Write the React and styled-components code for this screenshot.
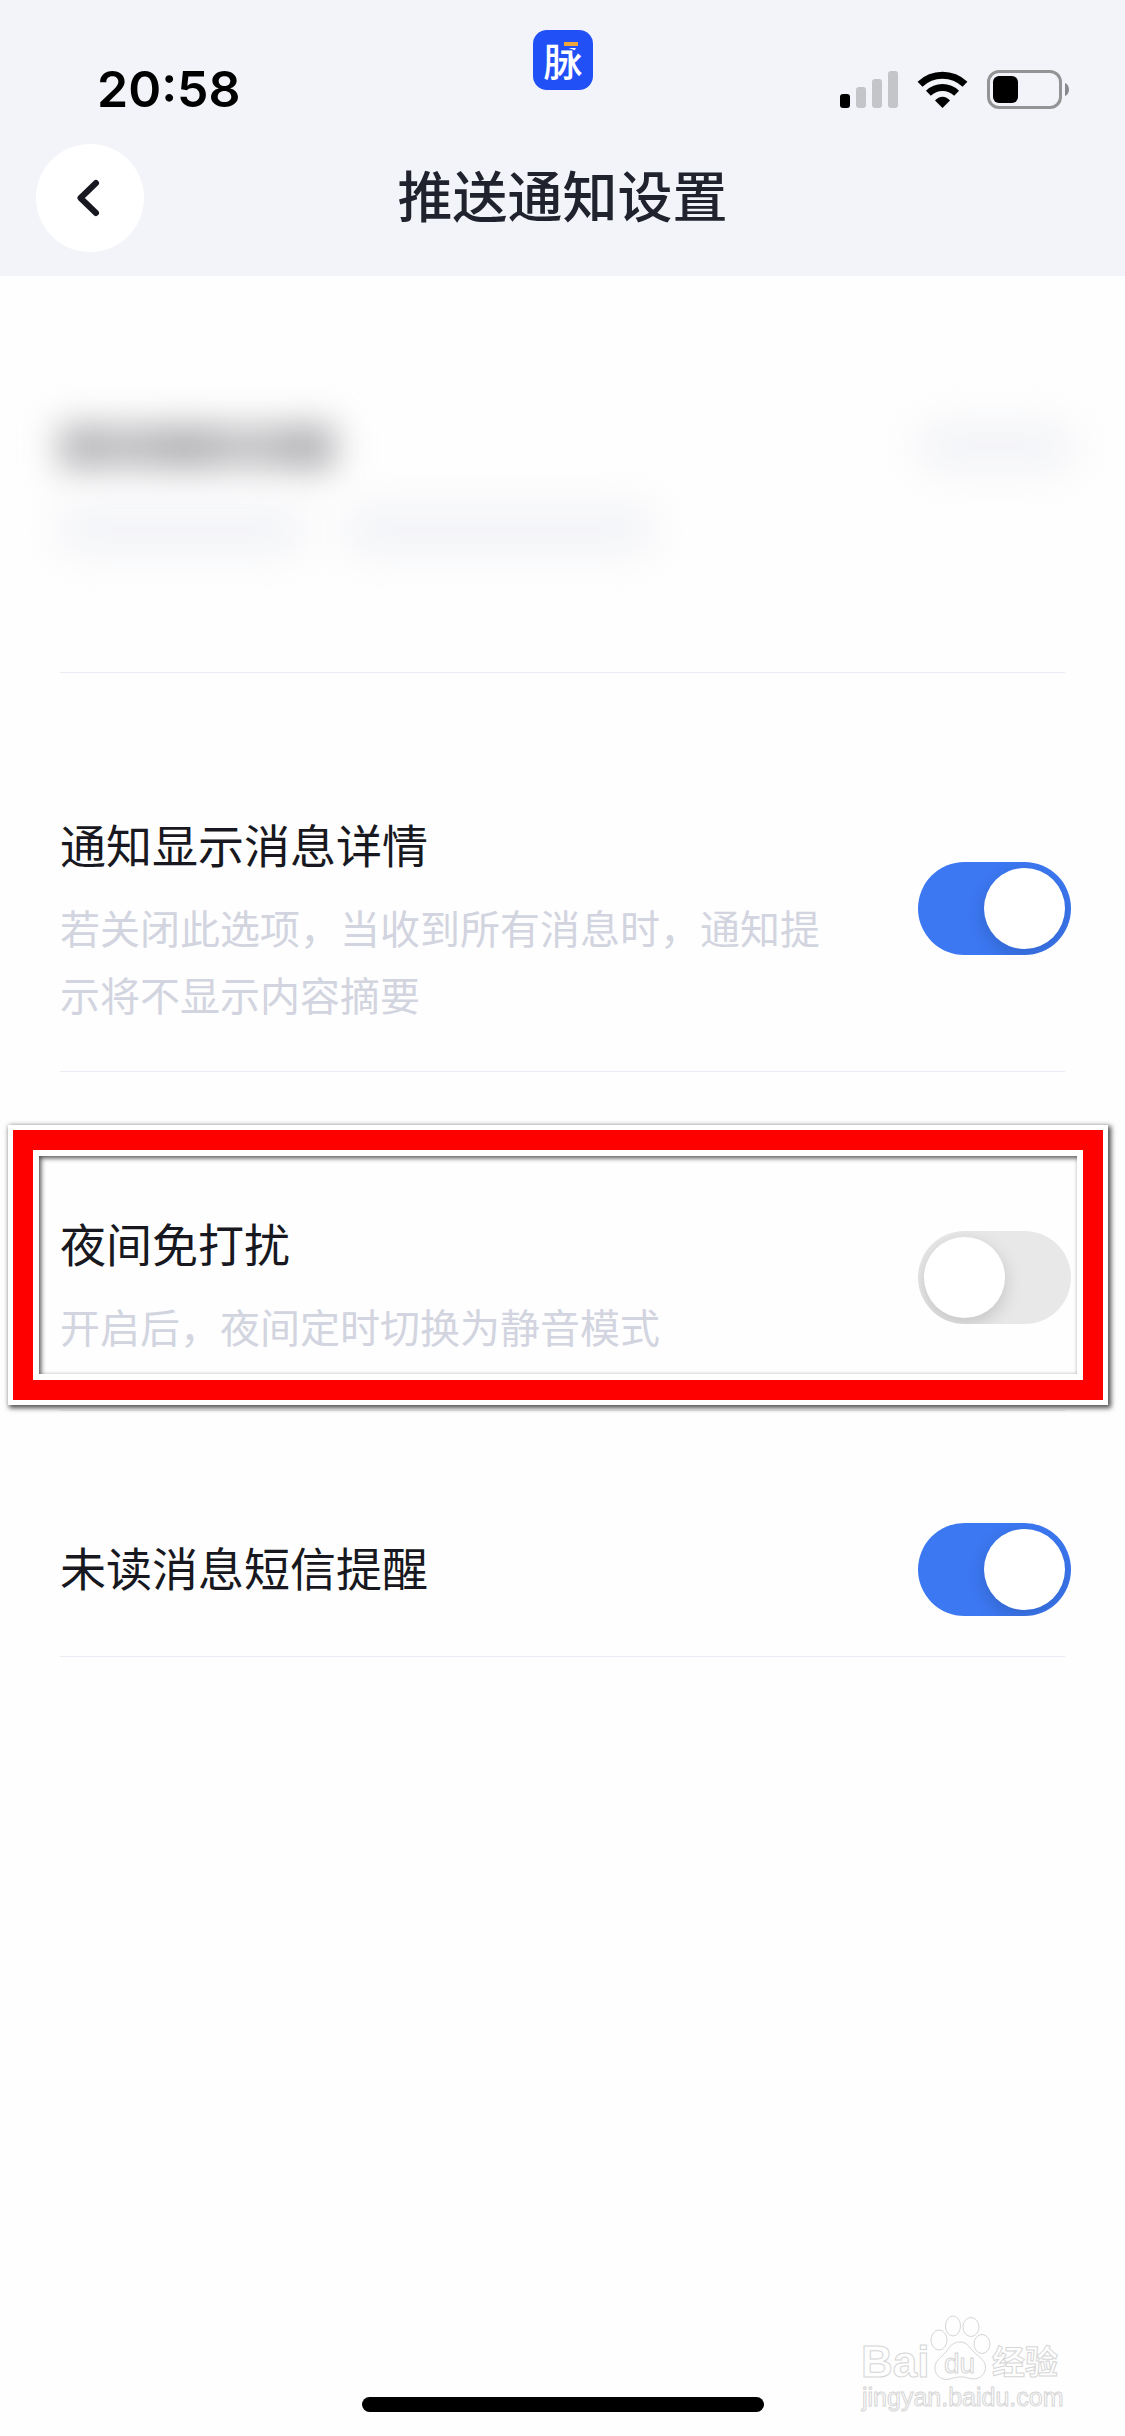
import { useState } from "react"
import styled, { createGlobalStyle } from "styled-components"

const GlobalStyle = createGlobalStyle`
    *{
        box-sizing:border-box;
    }
    body{
        margin:0;
        background:#fefefe;
        font-family:"Liberation Sans", "Noto Sans CJK SC", sans-serif;
    }
`
const Page = styled.div`
    position:relative;
    min-height:100vh;
    display:flex;
    flex-direction:column;
    color:#171820;
`
const Header = styled.header`
    background:#f3f4f9;
`
const StatusBar = styled.div`
    height:144px;
    padding-top:30px;
    display:grid;
    grid-template-columns:1fr auto 1fr;
    align-items:start;
`
const Side = styled.div`
    height:60px;
    margin-top:29px;
    padding:0 56px 0 97px;
    display:flex;
    align-items:center;
    justify-content:${props => (props.$end ? "flex-end" : "flex-start")};
    gap:19px;
`
const Time = styled.time`
    font-family:Inter, sans-serif;
    font-size:50px;
    font-weight:600;
    line-height:60px;
    color:#000;
`
const Nav = styled.nav`
    display:grid;
    grid-template-columns:1fr auto 1fr;
    align-items:center;
    padding:0 36px 24px;
`
const BackButton = styled.button`
    width:108px;
    height:108px;
    padding:0;
    border:none;
    border-radius:50%;
    background:#fff;
    display:flex;
    align-items:center;
    justify-content:center;
`
const Title = styled.h1`
    margin:0;
    font-size:55px;
    font-weight:500;
    line-height:108px;
    color:#20222e;
`
const Row = styled.section`
    position:relative;
    display:flex;
    align-items:center;
    justify-content:space-between;
    min-height:${props => (props.$tall ? "338px" : "0")};
    padding:112px 54px 40px 60px;
`
const Divider = styled.hr`
    width:auto;
    height:1px;
    margin:0 60px;
    border:none;
    background:#ebebf3;
`
const RowText = styled.div`
    flex:1;
    max-width:776px;
    align-self:${props => (props.$top ? "flex-start" : "center")};
    padding-top:${props => (props.$top ? "30px" : "0")};
`
const RowTitle = styled.label`
    display:block;
    font-size:46px;
    line-height:64px;
`
const RowDesc = styled.p`
    margin:18px 0 0;
    font-size:40px;
    line-height:67px;
    color:#d2d4df;
`
const Switch = styled.input`
    appearance:none;
    flex:none;
    width:153px;
    height:93px;
    margin:0;
    padding:6px;
    border-radius:47px;
    overflow:hidden;
    background:#e8e8e8;
    display:flex;
    justify-content:flex-start;

    &::before{
        content:"";
        width:81px;
        height:81px;
        border-radius:50%;
        background:#fff;
        box-shadow:0 6px 18px rgba(0,0,0,.16);
    }
    &:checked{
        background:#3c78f2;
        justify-content:flex-end;
    }
`
const Highlight = styled.div`
    position:absolute;
    top:58px;
    right:22px;
    bottom:10px;
    left:13px;
    border:20px solid #f00;
    box-shadow:
        0 0 0 5px #fff,
        2px 2px 5px 6px rgba(0,0,0,.7),
        inset 0 0 0 6px #fff,
        inset 2px 2px 5px 6px rgba(0,0,0,.7);
    pointer-events:none;
`
const HiddenRow = styled.section`
    height:396px;
    padding:150px 54px 0 60px;
    display:flex;
    justify-content:space-between;
`
const HiddenText = styled.div`
    display:flex;
    flex-direction:column;
    gap:40px;
`
const HiddenLine = styled.div`
    display:flex;
    gap:44px;
`
const Smudge = styled.span`
    width:${props => props.$width}px;
    height:42px;
    filter:blur(${props => (props.$dark ? "18px" : "20px")});
    background:${props => (props.$dark
        ? "linear-gradient(90deg, #a9a9ad, #bcbcbf 25%, #a8a8ac 46%, #c2c2c4 68%, #a8a8ac 92%)"
        : "#f1f2f6")};
`
const Footer = styled.footer`
    margin-top:auto;
    padding-bottom:24px;
    display:flex;
    justify-content:center;
`
const HomeBar = styled.div`
    width:402px;
    height:15px;
    border-radius:8px;
    background:#000;
`
const Watermark = styled.svg`
    position:absolute;
    right:55px;
    bottom:16px;
`

const AppLogo = () => (
    <svg width="60" height="60" viewBox="0 0 60 60" aria-hidden="true">
        <rect width="60" height="60" rx="14" fill="#2150f7" />
        <text x="30" y="46" fontSize="39" fontWeight="500" textAnchor="middle" fill="#fff" fontFamily="Noto Sans CJK SC, sans-serif">脉</text>
        <rect x="30" y="8" width="18" height="10" fill="#2150f7" />
        <rect x="31" y="12" width="14" height="4" fill="#f0a63a" />
    </svg>
)

const Signal = () => (
    <svg width="58" height="37" viewBox="0 0 58 37" aria-hidden="true">
        <rect x="0" y="23" width="10" height="14" rx="3" fill="#000" />
        <rect x="16" y="16" width="10" height="21" rx="3" fill="#c4c5c9" />
        <rect x="32" y="8" width="10" height="29" rx="3" fill="#c4c5c9" />
        <rect x="48" y="0" width="10" height="37" rx="3" fill="#c4c5c9" />
    </svg>
)

const Wifi = () => (
    <svg width="51" height="37" viewBox="0 0 51 37" aria-hidden="true">
        <path d="M3 13.3 A32.5 32.5 0 0 1 48 13.3" fill="none" stroke="#000" strokeWidth="7" />
        <path d="M11.4 22.3 A20.3 20.3 0 0 1 39.6 22.3" fill="none" stroke="#000" strokeWidth="7" />
        <path d="M18 29.5 C22 24.4 29 24.4 33 29.5 L25.5 37 Z" fill="#000" />
    </svg>
)

const Battery = () => (
    <svg width="82" height="39" viewBox="0 0 82 39" aria-hidden="true">
        <rect x="1.5" y="1.5" width="72" height="36" rx="10.5" fill="none" stroke="#949496" strokeWidth="3" />
        <rect x="6" y="6" width="25" height="27" rx="6" fill="#000" />
        <path d="M78 13 C83.3 15 83.3 24 78 26 Z" fill="#88898b" />
    </svg>
)

const Settings = [
    {
        id: "detail",
        title: "通知显示消息详情",
        desc: "若关闭此选项，当收到所有消息时，通知提示将不显示内容摘要",
        on: true,
    },
    {
        id: "night",
        title: "夜间免打扰",
        desc: "开启后，夜间定时切换为静音模式",
        on: false,
        highlight: true,
    },
    {
        id: "sms",
        title: "未读消息短信提醒",
        on: true,
    },
]

const SettingRow = ({ item }) => {
  const [on, setOn] = useState(item.on)

  return (
    <>
        <Row $tall={item.highlight}>
            <RowText $top={Boolean(item.desc)}>
                <RowTitle htmlFor={item.id}>{item.title}</RowTitle>
                {item.desc && <RowDesc>{item.desc}</RowDesc>}
            </RowText>
            <Switch
                id={item.id}
                type="checkbox"
                role="switch"
                checked={on}
                onChange={e => setOn(e.target.checked)}
            />
            {item.highlight && <Highlight />}
        </Row>
        <Divider />
    </>
  )
}

const App = () => {
  return (
    <Page>
        <GlobalStyle />
        <Header>
            <StatusBar>
                <Side>
                    <Time>20:58</Time>
                </Side>
                <AppLogo />
                <Side $end>
                    <Signal />
                    <Wifi />
                    <Battery />
                </Side>
            </StatusBar>
            <Nav>
                <BackButton aria-label="返回">
                    <svg width="36" height="40" viewBox="0 0 36 40" aria-hidden="true">
                        <path d="M24 5 L8.500 20 L24 35" fill="none" stroke="#171820" strokeWidth="6" strokeLinecap="round" strokeLinejoin="round" />
                    </svg>
                </BackButton>
                <Title>推送通知设置</Title>
            </Nav>
        </Header>
        <main>
            <HiddenRow aria-hidden="true">
                <HiddenText>
                    <Smudge $width={274} $dark />
                    <HiddenLine>
                        <Smudge $width={242} />
                        <Smudge $width={306} />
                    </HiddenLine>
                </HiddenText>
                <Smudge $width={150} />
            </HiddenRow>
            <Divider />
            {Settings.map(item => (
                <SettingRow key={item.id} item={item} />
            ))}
        </main>
        <Footer>
            <HomeBar />
        </Footer>
        <Watermark width="212" height="106" viewBox="0 0 212 106" fill="#fefefe" stroke="#d6d6d6" strokeWidth="1">
            <text x="3" y="63" fontSize="44" fontWeight="700" fontFamily="Liberation Sans, sans-serif">Bai</text>
            <ellipse cx="81" cy="26" rx="8" ry="10" />
            <ellipse cx="95" cy="12" rx="7.500" ry="10" />
            <ellipse cx="113" cy="13" rx="8" ry="9.500" />
            <ellipse cx="124" cy="30" rx="8" ry="9.500" />
            <path d="M102 28 C110 28 112 35 118 40 C125 45 129 50 127 57 C124 65 116 66 110 64 C104 62 98 63 92 65 C84 67 77 62 77 54 C77 46 83 44 88 38 C92 32 95 28 102 28 Z" />
            <text x="86" y="59" fontSize="28" fontWeight="400" fontFamily="Liberation Sans, sans-serif">du</text>
            <text x="134" y="60" fontSize="33" fontWeight="700" fontFamily="Noto Sans CJK SC, sans-serif">经验</text>
            <text x="4" y="92" fontSize="25" fontFamily="Liberation Sans, sans-serif">jingyan.baidu.com</text>
        </Watermark>
    </Page>
  )
}

export default App
